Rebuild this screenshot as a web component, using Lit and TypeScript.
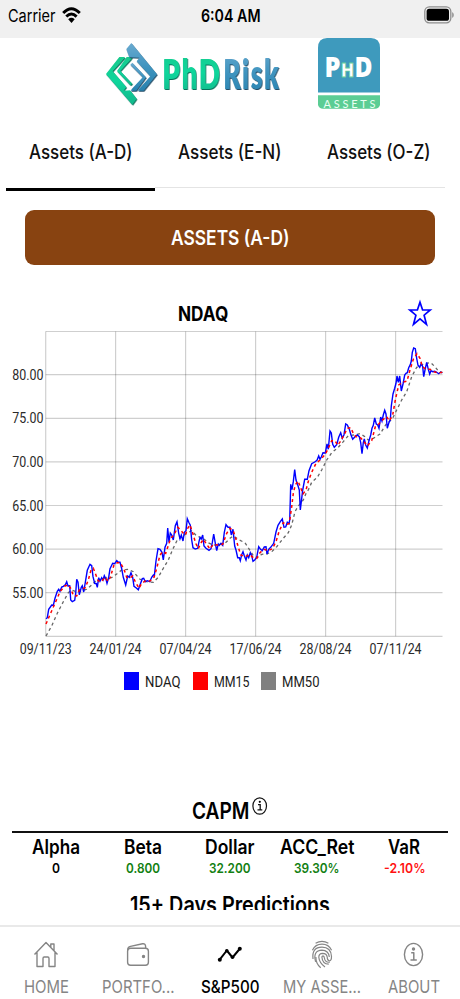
import { LitElement, html, svg, css } from "lit";
import { customElement } from "lit/decorators.js";

type Pt = [number, number];

// Series vertices: "x,y" pairs, in thirds of a pixel.
const parse = (s: string, dx: number, dy: number): Pt[] =>
  s.trim().split(/\s+/).map((p) => {
    const [x, y] = p.split(",").map(Number);
    return [dx + x / 3, dy + y / 3] as Pt;
  });

const path = (...parts: Pt[][]) =>
  "M" + parts.flat().map(([x, y]) => `${x.toFixed(1)} ${y.toFixed(1)}`).join("L");

const price = path(
  parse(`138,386 142,383 146,358 155,345 160,346 165,325 172,304 176,298 180,304 185,291 190,289 196,284 200,275 204,288 209,287 212,330 217,335 224,331 227,310 230,268 234,277 238,314 244,292 247,287 251,306 256,277 262,241 270,223 275,227 279,260 284,280 289,281 292,292 296,263 300,274 305,263 309,270 313,257 318,268 321,280 326,262 330,236 338,220 344,221 350,212 355,217 360,217 365,236 370,262 377,285 383,258 388,262 393,248 398,262 402,289 408,293 415,299 420,285 427,266 431,265 436,275 442,272 449,275 455,262 460,255 463,258 468,213 474,176 480,178 486,187 490,210 495,172 500,160 503,114 507,157 511,129 515,135 520,150 526,107 531,95 536,130 540,146 544,135 549,153 553,127 558,122 562,86 567,98 571,106 575,150 579,173 586,177 593,175 597,155 600,143 604,147 608,135 612,168 618,175 627,181 633,176 637,158 641,132 645,155 650,182 655,162 658,166 663,160 668,166 673,127 678,104 684,112 690,112 694,135 699,118 704,168 708,180 713,203`, 0, 490),
  parse(`58,203 61,212 65,194 69,185 73,197 78,210 82,195 86,203 91,188 95,197 99,214 104,210 110,202 116,170 121,177 127,182 133,171 138,170 141,192 146,178 152,172 161,160 168,126 174,106 181,95 187,87 192,112 197,111 202,97 207,101 209,90`, 220, 490),
  parse(`211,540 212,493 216,509 220,485 224,449 228,480 234,497 238,510 241,570 245,535 248,510 254,478 262,478 267,452 275,431 284,426 291,421 296,408 300,418 304,411 309,398 316,399 321,372 325,388 330,333 334,339 338,373 343,382 350,374 356,352 362,338 367,355 372,344 377,312 382,315 388,328 393,345 398,358 405,350 412,345 418,350 422,368 426,401 430,368 433,357 437,375 442,384 447,362 452,345 456,325 460,316 464,294 469,312 473,315 477,325 482,291 486,303 490,285 494,271 498,282 502,325 507,307 511,300 514,258 519,222 524,205 528,190 531,168 535,187 539,168 544,213 549,192 554,165 558,160 562,158 566,143 571,134 574,123 577,97 581,84 586,86 590,115 594,136 599,142 604,130 608,140 611,170 615,150 620,127 625,148 629,162 633,152 638,155 644,154 650,157 656,161 662,156 667,159`, 220, 320),
);
const mm15 = path(
  parse(`138,402 150,374 165,340 180,305 195,288 205,284 212,295 220,316 230,318 238,300 248,296 256,293 265,270 273,240 280,235 286,250 294,272 304,275 315,262 324,274 331,262 342,225 352,218 361,218 372,238 380,262 390,264 398,258 406,275 417,295 425,280 437,272 450,273 462,262 470,235 480,195 488,185 497,190 503,172 512,145 522,135 533,112 540,118 550,130 556,135 563,115 570,105 577,125 587,160 595,176 602,160 610,148 618,160 630,177 640,163 652,165`, 0, 490),
  parse(`8,163 20,130 30,115 40,122 50,155 62,195 75,200 90,194 100,203 110,205 120,188 132,178 144,182 157,176 168,155 178,122 190,98 200,104 208,100 215,50 220,10`, 220, 490),
  parse(`226,495 234,483 241,500 249,522 258,510 266,480 277,453 288,430 300,420 315,404 325,385 335,362 345,362 353,376 361,365 372,345 382,325 392,323 400,340 408,350 420,352 430,362 442,378 455,362 466,320 476,312 490,298 500,290 508,303 518,285 526,240 536,195 548,187 561,183 570,150 580,118 591,101 600,115 607,140 618,148 630,148 642,155 655,159 667,157`, 220, 320),
);
const mm50 = path(
  parse(`138,438 155,408 172,370 190,335 205,308 215,300 230,306 245,303 260,298 275,285 290,270 305,268 320,262 335,263 350,252 365,240 385,238 400,245 420,268 440,275 460,277 475,262 490,235 505,210 518,178 532,150 545,140 560,130 575,122 590,138 610,145 625,158 640,166 655,163 675,160 690,145 700,138`, 0, 490),
  parse(`58,150 75,158 88,178 100,197 112,203 125,193 140,192 155,185 170,170 190,145 205,128 215,105 225,65 235,48 250,30 260,5`, 220, 490),
  parse(`265,510 275,487 292,472 305,450 320,420 335,398 355,382 370,365 385,347 400,345 420,341 435,350 445,360 460,355 480,342 500,310 517,297 530,270 545,240 560,215 575,170 590,142 605,135 620,130 632,128 645,140 655,153 667,158`, 220, 320),
);

// One line of text set to an exact width; `base` is the baseline inside a box of height `h`.
const line = (text: string, w: number, size: number, h: number, base: number, cls = "") => html`
  <svg class="line ${cls}" width=${w} height=${h}>
    <text x="0" y=${base} font-size=${size} textLength=${w} lengthAdjust="spacingAndGlyphs">${text}</text>
  </svg>`;

const shared = css`
  * { box-sizing: border-box; }
  svg { display: block; flex: none; }
  .line { overflow: visible; fill: currentColor; }
  .med { font-weight: 500; }
  .semi { font-weight: 600; }
  .bold { font-weight: 700; }
`;

@customElement("status-bar")
class StatusBar extends LitElement {
  static styles = [shared, css`
    :host { display: grid; grid-template-columns: 1fr auto 1fr; height: 37.5px; padding: 0 6px 0 8px; background: #f0f0f0; }
    .left { display: flex; gap: 6px; }
    .wifi { margin-top: 7px; }
    .battery { justify-self: end; margin-top: 6px; }
  `];
  render() {
    return html`
      <div class="left">
        ${line("Carrier", 47.5, 16.8, 32, 22)}
        <svg class="wifi" width="19" height="17" viewBox="0 0 19 17">
          <g fill="none" stroke="#000" stroke-width="2.9">
            <path d="M1.2 6Q9.3-2.6 17.8 6" /><path d="M4.3 9.6Q9.4 4.4 14.6 9.6" />
          </g>
          <path d="M6.2 12.3Q9.4 9.4 12.7 12.3L9.5 16Z" />
        </svg>
      </div>
      ${line("6:04 AM", 59.5, 17.4, 32, 22, "semi")}
      <svg class="battery" width="30" height="18" viewBox="0 0 30 18">
        <rect x=".8" y=".8" width="26" height="16" rx="4.5" fill="none" stroke="#8d8d8d" stroke-width="1.3" />
        <rect x="2.6" y="2.8" width="22.4" height="12" rx="2.6" />
        <path d="M28.2 6v6q1.6-1 1.6-3t-1.6-3z" fill="#8d8d8d" />
      </svg>`;
  }
}

@customElement("brand-header")
class BrandHeader extends LitElement {
  static styles = [shared, css`
    :host { display: flex; gap: 36px; padding-left: 104px; height: 78.5px; }
    .logo { overflow: visible; }
    .green { filter: drop-shadow(2px 3px 0 #08705a); }
    .blue { filter: drop-shadow(2px 3px 0 #234c66); }
    .word { font-family: Lato, sans-serif; font-weight: 800; letter-spacing: 7px; }
    .badge { font-family: "Open Sans", sans-serif; font-weight: 800; }
    .small { font-family: Lato, sans-serif; font-weight: 400; }
  `];
  render() {
    return html`
      <svg class="logo" width="178" height="72" viewBox="27 8 534 216">
        <defs>
          <linearGradient id="g" x1="0" y1="0" x2="0" y2="1"><stop offset="0" stop-color="#17c98b" /><stop offset=".5" stop-color="#0fd69c" /><stop offset="1" stop-color="#12b78b" /></linearGradient>
          <linearGradient id="b" x1="0" y1="0" x2="0" y2="1"><stop offset="0" stop-color="#6aaad0" /><stop offset=".5" stop-color="#3f94bf" /><stop offset="1" stop-color="#2781ae" /></linearGradient>
        </defs>
        <g transform="translate(15 3)">
          <g class="green" fill="url(#g)">
            <path d="M18 113L58 62H75L72 67L38 105L79 152L71 163L90 162L110 187L97 205Z" />
            <path d="M80 62H97L93 69L61 104L97 142L91 147L51 104Z" />
          </g>
          <g class="blue" fill="url(#b)">
            <path d="M171 114L131 163H114L117 158L151 120L110 75L118 64L88 63L79 38L94 20Z" />
            <path d="M109 163H92L96 157L128 123L91 85L97 79L138 123Z" />
          </g>
        </g>
        <g class="word" font-size="127">
          <g class="green" fill="url(#g)"><text x="202" y="161" textLength="177" lengthAdjust="spacingAndGlyphs">PhD</text></g>
          <g class="blue" fill="url(#b)"><text x="385" y="161" textLength="171" lengthAdjust="spacingAndGlyphs">Risk</text></g>
        </g>
      </svg>
      <svg width="62" height="71" viewBox="0 0 62 71">
        <path fill="#3e9abd" d="M0 54.5V10Q0 0 9 0H53Q62 0 62 10V54.5Z" />
        <path fill="#5bcd94" d="M0 57.3H62V67Q61 70.7 57 70.7H5Q1 70.7 0 67Z" />
        <g class="badge" fill="#fff">
          <text x="6.5" y="39.3" font-size="28" textLength="16" lengthAdjust="spacingAndGlyphs">P</text>
          <text x="22.7" y="39.3" font-size="19.5" textLength="13.5" lengthAdjust="spacingAndGlyphs" stroke="#67cf9b" stroke-width=".8">H</text>
          <text x="36.6" y="39.3" font-size="28" textLength="18" lengthAdjust="spacingAndGlyphs">D</text>
        </g>
        <text class="small" x="5.5" y="69.5" font-size="11" fill="#e9fff3" textLength="52" lengthAdjust="spacing">ASSETS</text>
      </svg>`;
  }
}

@customElement("asset-tabs")
class AssetTabs extends LitElement {
  static styles = [shared, css`
    :host { display: grid; grid-template-columns: repeat(3, 149.2px); height: 74.5px; padding-left: 6px; margin-right: 6px; }
    .tab { display: flex; justify-content: center; height: 72px; border-bottom: 1px solid #e4e4e4; color: #111; }
    .tab:last-of-type { margin-right: 9px; padding-left: 9px; }
    .active { height: 74.5px; border-bottom: 3px solid #000; }
  `];
  render() {
    return html`${["Assets (A-D)", "Assets (E-N)", "Assets (O-Z)"].map((t, i) => html`
      <div class="tab ${i === 0 ? "active" : ""}">${line(t, 103.5, 19.8, 50, 42.7, "med")}</div>`)}`;
  }
}

@customElement("price-chart")
class PriceChart extends LitElement {
  static styles = [shared, css`
    :host { display: block; }
    .head { display: grid; grid-template-columns: 178px 1fr auto; height: 32px; padding-right: 27px; }
    .axis { font-family: Roboto, sans-serif; fill: #2a2a2a; }
    .legend { display: flex; padding-left: 124px; margin-top: 12px; height: 19px; font-family: Roboto, sans-serif; color: #1c1c1c; }
    .item { display: flex; gap: 6px; width: 68.6px; }
    .swatch { width: 15px; height: 18px; }
    .blue { background: #00f; } .red { background: #f00; } .gray { background: #808080; }
  `];
  render() {
    const ys = [331.5, 374.7, 418.3, 461.8, 505.5, 549.2, 592.7, 636.3];
    const xs = [45.7, 115.6, 185.6, 255.6, 325.6, 395.6];
    const dates = ["09/11/23", "24/01/24", "07/04/24", "17/06/24", "28/08/24", "07/11/24"];
    const legend = [["NDAQ", "blue", 35.5], ["MM15", "red", 35.5], ["MM50", "gray", 37.5]] as const;
    return html`
      <div class="head">
        <span></span>
        ${line("NDAQ", 50.3, 19.8, 32, 22.6, "bold")}
        <svg width="26" height="30" viewBox="0 0 26 30">
          <path fill="none" stroke="#00f" stroke-width="1.7" stroke-linejoin="miter" d="M13 4.2L15.6 12H23.2L17.1 17.2L19.5 26.3L13 20.8L6.5 26.3L8.9 17.2L2.8 12H10.4Z" />
        </svg>
      </div>
      <svg width="460" height="330" viewBox="0 330 460 330">
        <g stroke="#000" stroke-opacity=".19" stroke-width="1.2">
          ${ys.map((y) => svg`<line x1="45.7" x2="442.5" y1=${y} y2=${y} />`)}
          ${xs.map((x) => svg`<line x1=${x} x2=${x} y1="331.5" y2="636.3" />`)}
        </g>
        <g fill="none" stroke-width="1.4">
          <path stroke="#666" stroke-width="1.3" stroke-dasharray="3 3" d=${mm50} />
          <path stroke="#00f" d=${price} />
          <path stroke="#f00" stroke-width="1.5" stroke-dasharray="3 3" d=${mm15} />
        </g>
        <g class="axis" font-size="14.6">
          ${["80.00", "75.00", "70.00", "65.00", "60.00", "55.00"].map((t, i) => svg`
            <text x="12.2" y=${ys[i + 1] + 5} textLength="31.2" lengthAdjust="spacingAndGlyphs">${t}</text>`)}
          ${dates.map((t, i) => svg`
            <text x=${xs[i] - 26} y="654.4" textLength="52" lengthAdjust="spacingAndGlyphs">${t}</text>`)}
        </g>
      </svg>
      <div class="legend">
        ${legend.map(([t, c, w]) => html`
          <div class="item"><div class="swatch ${c}"></div>${line(t, w, 14.4, 18, 15.4)}</div>`)}
      </div>`;
  }
}

@customElement("capm-panel")
class CapmPanel extends LitElement {
  static styles = [shared, css`
    :host { display: block; padding: 0 12px; }
    .title { display: flex; padding-left: 179.5px; gap: 3px; height: 35.5px; }
    .cells { display: grid; grid-template-columns: repeat(5, 1fr); height: 61px; border-top: 2px solid #111; }
    .cell { display: flex; flex-direction: column; align-items: center; }
    .pos { color: #128012; } .neg { color: #f11; } .zero { color: #000; }
    .next { display: flex; justify-content: center; height: 18px; overflow: hidden; }
  `];
  render() {
    const cells = [
      ["Alpha", 48, "0", 8, "zero"], ["Beta", 38, "0.800", 34, "pos"], ["Dollar", 49.5, "32.200", 41.5, "pos"],
      ["ACC_Ret", 74.5, "39.30%", 45.5, "pos"], ["VaR", 32, "-2.10%", 41.5, "neg"],
    ] as const;
    return html`
      <div class="title">
        ${line("CAPM", 57.5, 22.6, 30, 22.5, "semi")}
        <svg width="16" height="20" viewBox="0 0 16 20">
          <ellipse cx="7.7" cy="10" rx="6.8" ry="8.2" fill="none" stroke="#111" stroke-width="1.2" />
          <path fill="none" stroke="#111" stroke-width="1.3" d="M6 8.7H8.2V13.6M5.5 13.8H10.3" /><circle cx="7.8" cy="5.8" r="1.1" />
        </svg>
      </div>
      <div class="cells">
        ${cells.map(([name, nw, value, vw, tone]) => html`
          <div class="cell">
            ${line(name, nw, 19.8, 26, 20.7, "semi")}
            ${line(value, vw, 12.9, 18, 13.6, `semi ${tone}`)}
          </div>`)}
      </div>
      <div class="next">${line("15+ Days Predictions", 200, 22.4, 18, 20.8, "semi")}</div>`;
  }
}

const icons = {
  home: svg`<path d="M3.5 14.5L15 2.5L26.5 14.5M6 12.5V26.5H12V18.5Q12 17 13.2 17H16.8Q18 17 18 18.5V26.5H24V12.5M19.8 7V4H23V10.5" />`,
  wallet: svg`<rect x="4.6" y="8.2" width="20.8" height="17" rx="3" /><path d="M4.8 10Q4.5 7 7.5 6.4L19.5 3.8Q22.6 3.4 22.6 6.5V8" /><circle cx="20.5" cy="16.5" r="1" fill="currentColor" />`,
  chart: svg`<path stroke-width="2" d="M4.5 19.8L11.8 10.5L17.5 17.5L25 8.5" /><g fill="currentColor" stroke="none"><circle cx="4.8" cy="19.8" r="2" /><circle cx="11.8" cy="10.7" r="1.8" /><circle cx="17.5" cy="17.3" r="1.8" /><circle cx="24.8" cy="8.8" r="2" /></g>`,
  finger: svg`<g stroke-width="1.2"><path d="M8.6 3.2Q15-.4 21.4 3.2" /><path d="M5.4 10.3Q8.3 4.2 15 4.2T24.6 10.3" /><path d="M6 19Q4.6 7.3 15 7.2Q24 7.3 24.5 16.5Q24.5 21 22.3 20.8Q20.3 20.6 20.2 17Q19.6 13.4 15.6 13.4Q11.8 13.5 11.8 17.3Q12.3 23 18 27" /><path d="M8.6 21.8Q5.6 10.5 15 10.2Q21.6 10.4 22.3 17" /><path d="M13.7 27.8Q8.6 23.3 8.9 17" /><path d="M21.8 24.2Q15.3 24 14.9 17Q15.2 15.8 16 15.8Q17.2 15.9 17.4 18Q18 22.7 22.8 22.2" /></g>`,
  info: svg`<ellipse cx="14.5" cy="14.5" rx="9.1" ry="11.1" /><path stroke-width="1.5" d="M12.2 12.8H14.8V19.8M11.5 20H17.8" /><circle cx="14.5" cy="9" r="1" fill="currentColor" />`,
};

@customElement("bottom-nav")
class BottomNav extends LitElement {
  static styles = [shared, css`
    :host { display: grid; grid-template-columns: repeat(5, 1fr); height: 74px; border-top: 2px solid #e9e9e9; padding-top: 13px; }
    .item { display: flex; flex-direction: column; align-items: center; color: #858585; }
    .on { color: #000; }
    .icon { fill: none; stroke: currentColor; stroke-width: 1.4; stroke-linejoin: round; }
  `];
  render() {
    const items = [
      ["HOME", 45, icons.home], ["PORTFO...", 72.5, icons.wallet], ["S&P500", 58.5, icons.chart],
      ["MY ASSE...", 78, icons.finger], ["ABOUT", 52, icons.info],
    ] as const;
    return html`${items.map(([t, w, icon], i) => html`
      <div class="item ${i === 2 ? "on" : ""}">
        <svg class="icon" width="30" height="30" viewBox="0 0 30 30">${icon}</svg>
        ${line(t, w, 17.3, 28, 23, i === 2 ? "med" : "")}
      </div>`)}`;
  }
}

@customElement("app-root")
class AppRoot extends LitElement {
  static styles = [shared, css`
    :host { display: flex; flex-direction: column; width: 460px; height: 999px; overflow: hidden; background: #fff; color: #000; font-family: Inter, sans-serif; }
    .banner { display: flex; justify-content: center; height: 55.5px; margin: 19px 24.7px 33px; border-radius: 9px; background: #884311; color: #fff; }
    capm-panel { margin-top: 104.7px; }
    bottom-nav { margin-top: auto; }
  `];
  render() {
    return html`
      <status-bar></status-bar>
      <brand-header></brand-header>
      <asset-tabs></asset-tabs>
      <div class="banner">${line("ASSETS (A-D)", 118.5, 19.8, 55, 35.4, "semi")}</div>
      <price-chart></price-chart>
      <capm-panel></capm-panel>
      <bottom-nav></bottom-nav>`;
  }
}
